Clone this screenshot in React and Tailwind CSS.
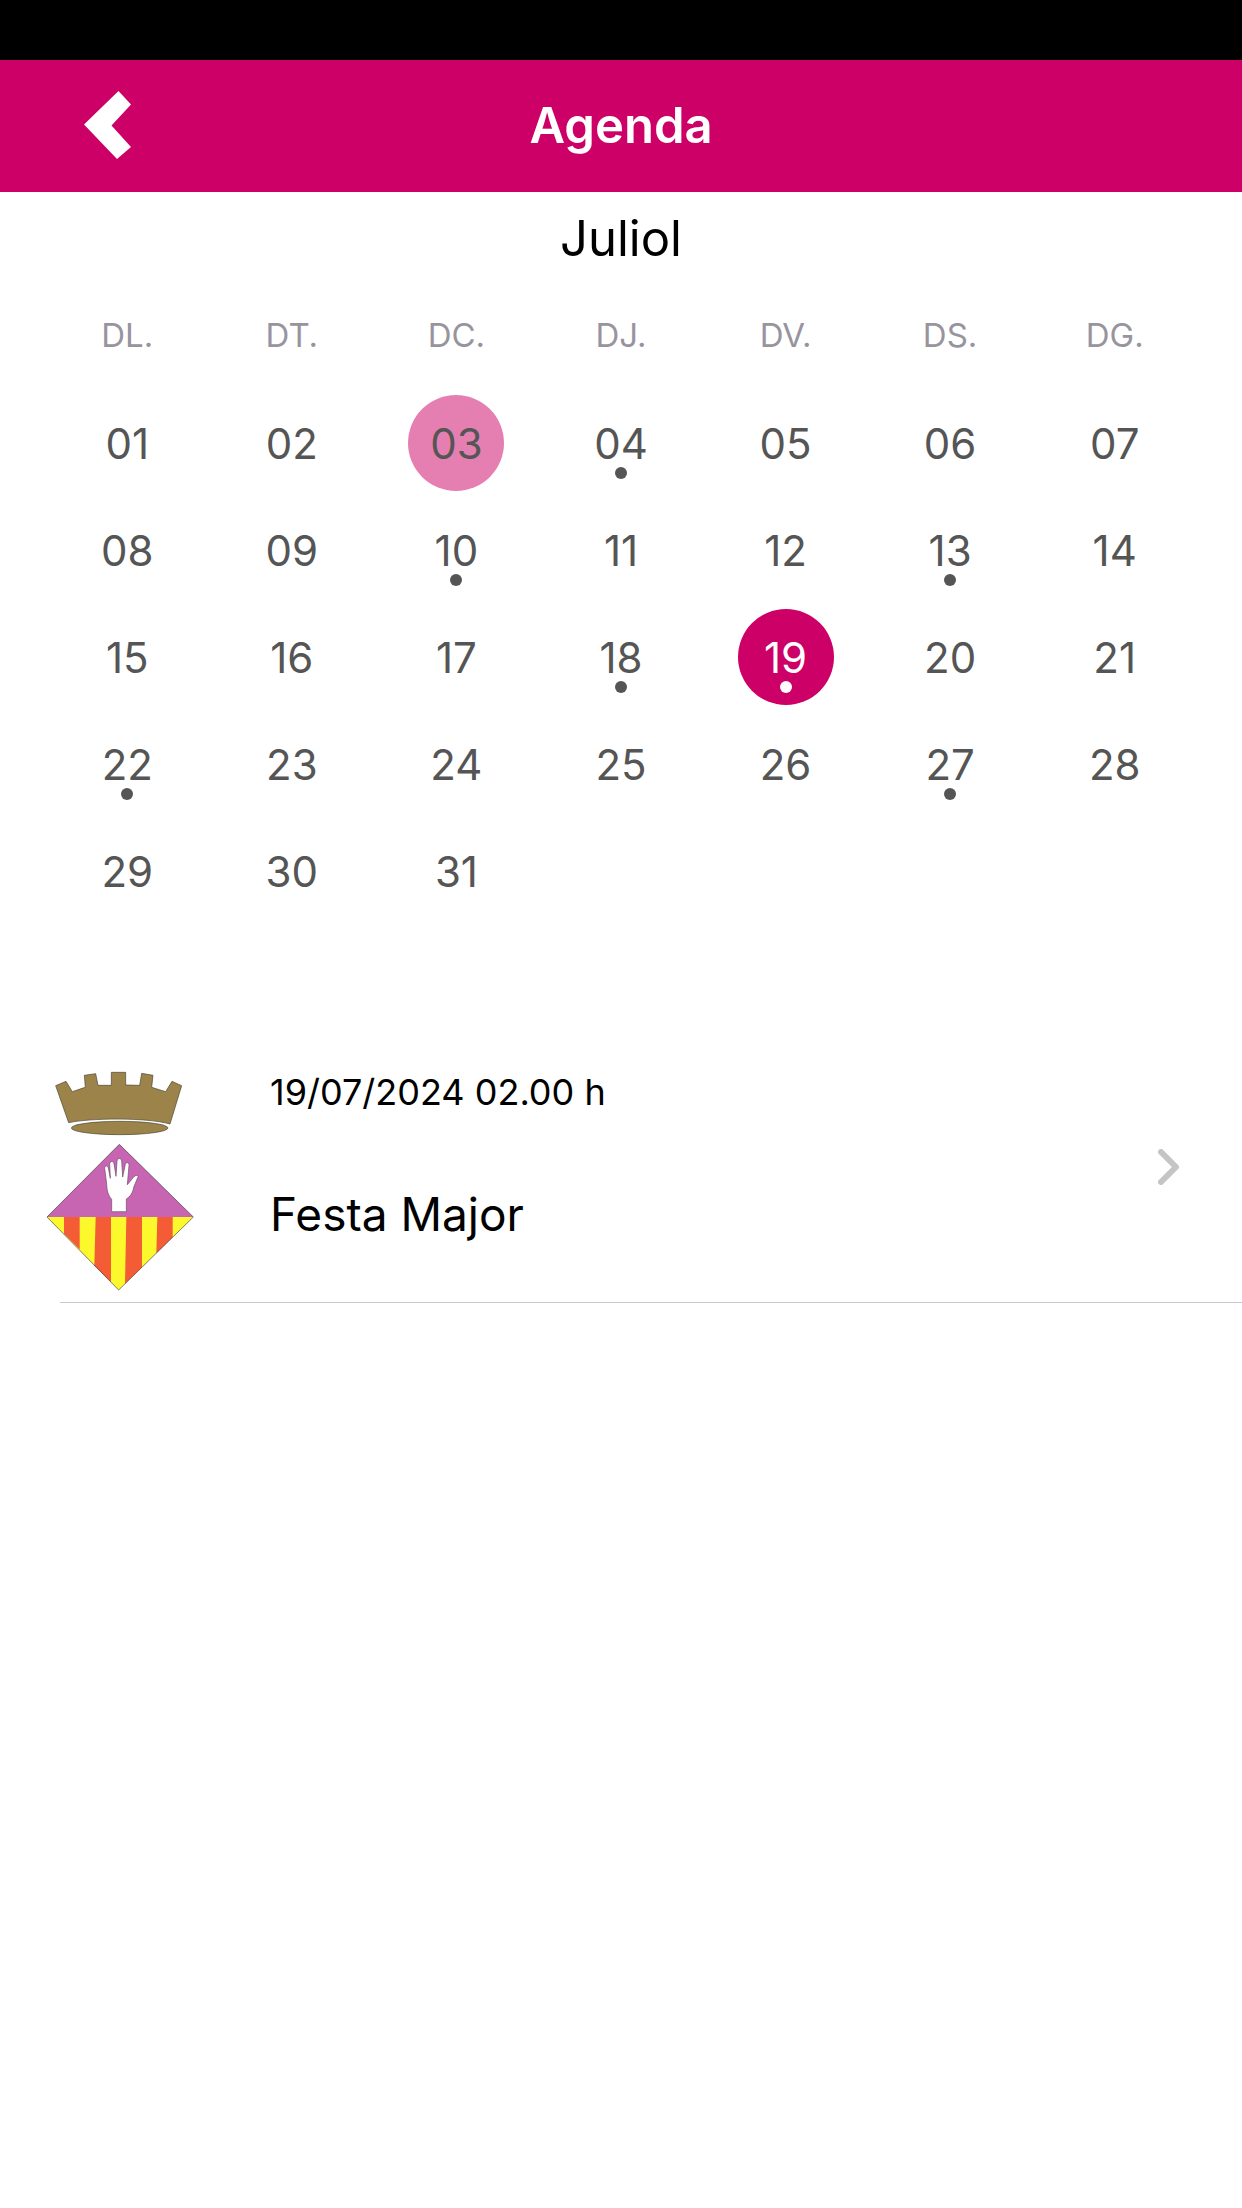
import React from "react";

const weekdays = ["DL.", "DT.", "DC.", "DJ.", "DV.", "DS.", "DG."];

const weeks = [
  ["01", "02", "03", "04", "05", "06", "07"],
  ["08", "09", "10", "11", "12", "13", "14"],
  ["15", "16", "17", "18", "19", "20", "21"],
  ["22", "23", "24", "25", "26", "27", "28"],
  ["29", "30", "31", null, null, null, null],
];

const daysWithEvents = ["04", "10", "13", "18", "19", "22", "27"];
const today = "03";
const selected = "19";

function Header() {
  return (
    <header>
      <div className="h-[60px] bg-black" />
      <div className="grid h-[132px] grid-cols-[1fr_auto_1fr] items-center bg-[#cc0066] text-white">
        <button type="button" aria-label="Enrere" className="ml-[84px] w-12">
          <svg viewBox="0 1 48 70" className="h-[70px] w-12" fill="currentColor">
            <path d="M34.5 1 47 14.500 27.500 35.500 47 57 33 69 0 34.500Z" />
          </svg>
        </button>
        <h1 className="text-[49px] font-semibold">Agenda</h1>
      </div>
    </header>
  );
}

function Day({ day }) {
  let color = "text-[#555555]";
  let dot = "bg-[#555555]";
  if (day === today) color = "bg-[#e57fb2] text-[#555555]";
  if (day === selected) {
    color = "bg-[#cc0066] text-white";
    dot = "bg-white";
  }

  return (
    <button
      type="button"
      className={`relative mx-auto flex size-24 items-center justify-center rounded-full pt-0.5 text-[42px] ${color}`}
    >
      {day}
      {daysWithEvents.includes(day) && (
        <span
          className={`absolute bottom-3 left-1/2 size-3 -translate-x-1/2 rounded-full ${dot}`}
        />
      )}
    </button>
  );
}

function Calendar() {
  return (
    <section className="px-[45px]">
      <h2 className="flex h-[90px] items-center justify-center pt-1 text-[49px] text-black">
        Juliol
      </h2>
      <table className="w-full table-fixed">
        <thead>
          <tr className="h-[107px]">
            {weekdays.map((name) => (
              <th
                key={name}
                scope="col"
                className="p-0 text-center text-[33px] font-normal text-[#98949e]"
              >
                {name}
              </th>
            ))}
          </tr>
        </thead>
        <tbody>
          {weeks.map((week, i) => (
            <tr key={i} className="h-[107px]">
              {week.map((day, j) => (
                <td key={j} className="p-0">
                  {day && <Day day={day} />}
                </td>
              ))}
            </tr>
          ))}
        </tbody>
      </table>
    </section>
  );
}

function Crest() {
  return (
    <svg
      viewBox="45 60 450 666"
      className="h-[222px] w-[150px] shrink-0"
      role="img"
      aria-label="Escut"
    >
      {/* crown */}
      <g fill="#9c8349" stroke="#4a4434" strokeWidth="2">
        <path d="M77 107 108 94 127 125Q165 112 166 112L163 76 197 71 204 106H244V67H287V105L329 106 335 70 369 76 365 112 407 125 426 94 455 107 420 222C350 202 180 204 116 218Z" />
        <ellipse cx="269" cy="234" rx="145" ry="20" />
      </g>
      {/* lozenge */}
      <path d="M268 283 490 501H51Z" fill="#c765b2" />
      <path d="M51 501H490L266 720Z" fill="#fbf92c" />
      <g fill="#f35c35">
        <path d="M102 501H149V598L102 551Z" />
        <path d="M197 501H243V697L193 647Z" />
        <path d="M289 501H336V652L285 701Z" />
        <path d="M382 501H428V562L379 610Z" />
      </g>
      <path d="M268 283 490 501 266 720 51 501Z" fill="none" stroke="#4a4048" strokeWidth="2" />
      {/* hand */}
      <path
        d="M245 485V448C233 434 231 420 230 402L224 355C224 346 233 346 235 354L241 385 239 342C240 332 250 332 252 341L258 379 261 334C262 322 274 323 275 333L278 381 286 343C288 335 298 337 297 346L292 404 308 385C313 377 321 374 325 378L311 412C308 430 300 440 289 447V485Z"
        fill="#fff"
        stroke="#6b4a68"
        strokeWidth="2"
        strokeLinejoin="round"
      />
    </svg>
  );
}

function EventRow({ date, title }) {
  return (
    <li>
      <a href="#event" className="flex h-[270px] items-center pr-[62px] pl-[45px] text-black">
        <div className="pt-7">
          <Crest />
        </div>
        <div className="ml-[75px] flex grow flex-col gap-[68px] self-start pt-9">
          <p className="text-[36px] leading-[48px]">{date}</p>
          <p className="text-[46px] leading-[60px]">{title}</p>
        </div>
        <svg viewBox="0 0 22 36" className="h-9 w-[22px] shrink-0" fill="none">
          <path
            d="M3 3 18 18 3 33"
            stroke="#c5c5c7"
            strokeWidth="6"
            strokeLinecap="round"
            strokeLinejoin="round"
          />
        </svg>
      </a>
      <div className="ml-[60px] h-px bg-[#c8c7cc]" />
    </li>
  );
}

export default function App() {
  return (
    <div className="min-h-screen bg-white font-['Inter',sans-serif]">
      <Header />
      <main>
        <Calendar />
        <ul className="mt-[108px]">
          <EventRow date="19/07/2024 02.00 h" title="Festa Major" />
        </ul>
      </main>
    </div>
  );
}
